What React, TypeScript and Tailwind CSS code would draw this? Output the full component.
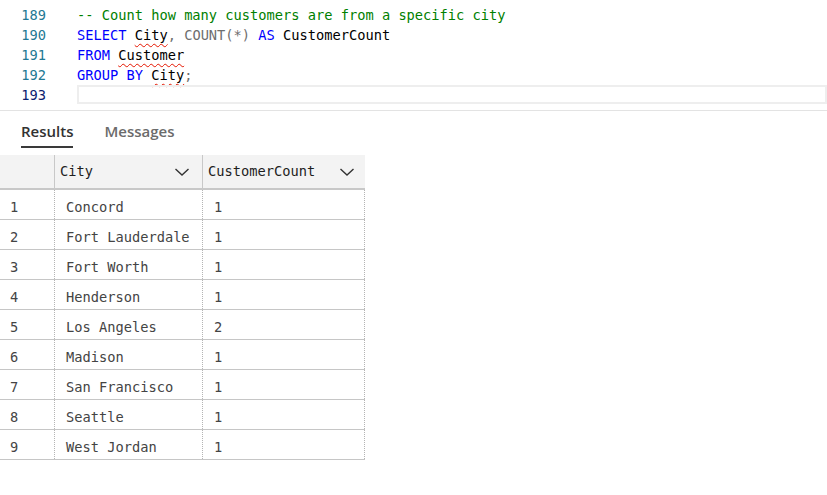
import React from 'react'

const MONO = "font-['DejaVu_Sans_Mono','Liberation_Mono',monospace]"
const SANS = "font-['Open_Sans','Noto_Sans',sans-serif]"

const rows = [
  { city: 'Concord', count: 1 },
  { city: 'Fort Lauderdale', count: 1 },
  { city: 'Fort Worth', count: 1 },
  { city: 'Henderson', count: 1 },
  { city: 'Los Angeles', count: 2 },
  { city: 'Madison', count: 1 },
  { city: 'San Francisco', count: 1 },
  { city: 'Seattle', count: 1 },
  { city: 'West Jordan', count: 1 },
]

function Squiggle({ children }: { children: React.ReactNode }) {
  return (
    <span className="underline decoration-wavy decoration-[#e51400] decoration-1 underline-offset-[3px]">
      {children}
    </span>
  )
}

function Chevron() {
  return (
    <svg width="16" height="10" viewBox="0 0 16 10" className="shrink-0">
      <polyline points="1.5,2 8,8 14.5,2" fill="none" stroke="#333" strokeWidth="1.4" />
    </svg>
  )
}

function CodeLine({ num, active, children }: { num: number; active?: boolean; children?: React.ReactNode }) {
  return (
    <div className="flex h-[20px] items-center">
      <div className={`w-[46px] text-right ${active ? 'text-[#0b216f]' : 'text-[#237893]'}`}>{num}</div>
      <div className="ml-[31px] flex-1 whitespace-pre">{children}</div>
    </div>
  )
}

export default function App() {
  return (
    <div className={`w-[827px] h-[495px] bg-white overflow-hidden ${SANS}`}>
      {/* editor */}
      <div className={`pt-[5px] text-[13.7px] ${MONO}`}>
        <CodeLine num={189}>
          <span className="text-[#008000]">-- Count how many customers are from a specific city</span>
        </CodeLine>
        <CodeLine num={190}>
          <span className="text-[#0000ff]">SELECT</span> <Squiggle>City</Squiggle>
          <span className="text-[#6e6e6e]">, COUNT(*)</span> <span className="text-[#0000ff]">AS</span>{' '}
          <span className="text-black">CustomerCount</span>
        </CodeLine>
        <CodeLine num={191}>
          <span className="text-[#0000ff]">FROM</span> <Squiggle>Customer</Squiggle>
        </CodeLine>
        <CodeLine num={192}>
          <span className="text-[#0000ff]">GROUP BY</span> <Squiggle>City</Squiggle>
          <span className="text-[#6e6e6e]">;</span>
        </CodeLine>
        <div className="flex h-[20px]">
          <div className="w-[46px] text-right text-[#0b216f] leading-[20px]">193</div>
          <div className="ml-[31px] flex-1 h-[19px] border-2 border-[#eeeeee]" />
        </div>
      </div>

      <div className="mt-[5px] border-t border-[#e3e3e3]" />

      {/* tabs */}
      <div className="flex h-[44px] pl-[21px] gap-[31px] text-[15px]">
        <div className="flex flex-col pt-[10px]">
          <div className="leading-[20px] text-[#323232] font-semibold">Results</div>
          <div className="mt-[5px] h-[2px] bg-[#3a3a3a]" />
        </div>
        <div className="pt-[10px] leading-[20px] text-[#6b6b6b] font-semibold">Messages</div>
      </div>

      {/* grid */}
      <div className={`w-[365px] text-[13.7px] ${MONO}`}>
        <div className="flex h-[35px] bg-[#f3f3f3] border-b-2 border-[#c8c8c8] text-[#1e1e1e]">
          <div className="w-[55px] border-r border-[#c8c8c8]" />
          <div className="w-[148px] flex items-center justify-between pl-[5px] pr-[12px] border-r border-[#c8c8c8]">
            <span>City</span>
            <Chevron />
          </div>
          <div className="w-[162px] flex items-center justify-between pl-[5px] pr-[10px]">
            <span>CustomerCount</span>
            <Chevron />
          </div>
        </div>
        {rows.map((r, i) => (
          <div key={r.city} className="flex h-[30px] border-b border-[#c6c6c6] text-[#444]">
            <div className="w-[55px] flex items-center pt-[5px] pl-[10px] border-r border-dotted border-[#b4b4b4]">
              {i + 1}
            </div>
            <div className="w-[148px] flex items-center pt-[5px] pl-[11px] border-r border-dotted border-[#b4b4b4]">
              {r.city}
            </div>
            <div className="w-[162px] flex items-center pt-[5px] pl-[11px] border-r border-dotted border-[#b4b4b4]">
              {r.count}
            </div>
          </div>
        ))}
      </div>
    </div>
  )
}
